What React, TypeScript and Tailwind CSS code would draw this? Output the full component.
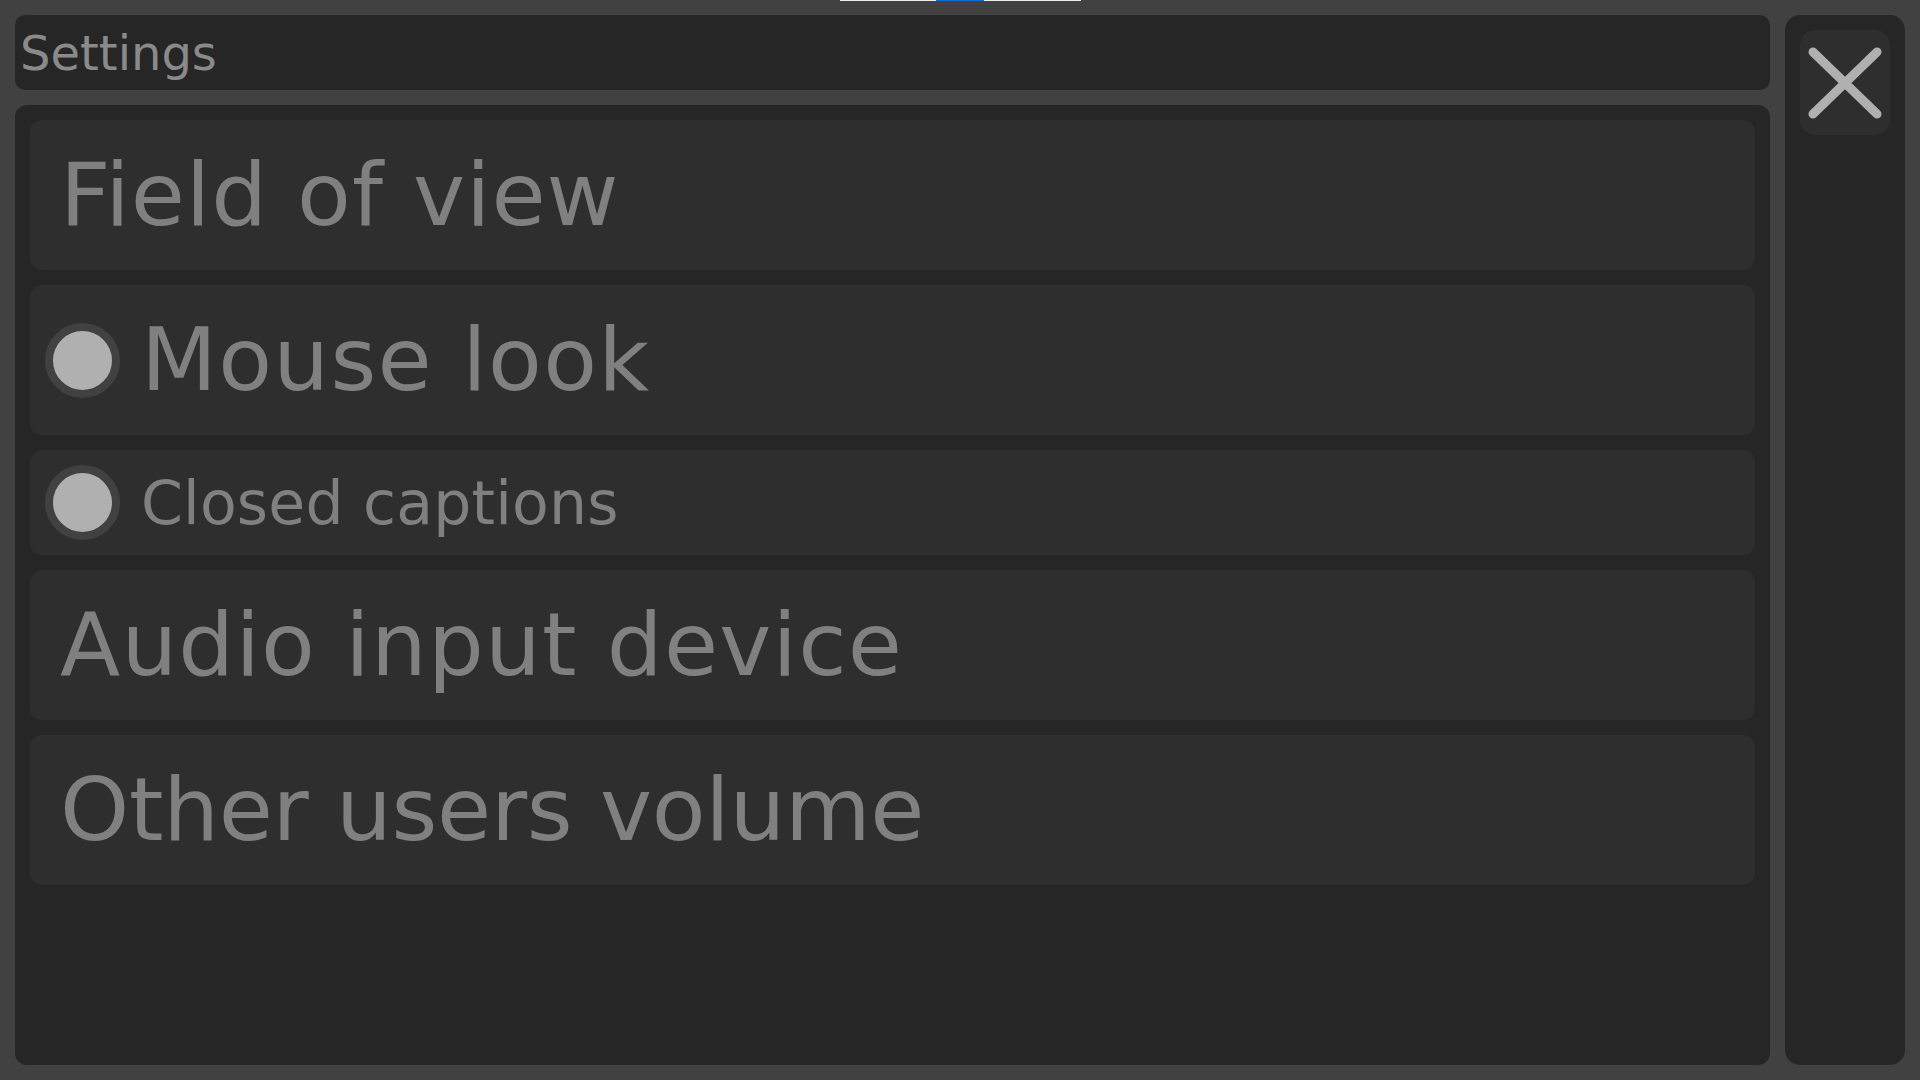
import React from 'react';

type Row = { label: string; toggle?: boolean; small?: boolean; track: string };

const rows: Row[] = [
    { label: 'Field of view', track: 'tracking-[1px]' },
    { label: 'Mouse look', toggle: true, track: 'tracking-[1.3px]' },
    { label: 'Closed captions', toggle: true, small: true, track: 'tracking-[0.2px]' },
    { label: 'Audio input device', track: 'tracking-[1.2px]' },
    { label: 'Other users volume', track: 'tracking-[-0.3px]' },
];

function Radio() {
    return (
        <div className="w-[75px] h-[75px] shrink-0 rounded-full border-[8px] border-[#414141] bg-[#b0b0b0]" />
    );
}

function SettingRow({ row }: { row: Row }) {
    return (
        <div
            className={`flex items-center bg-[#2e2e2e] rounded-[12px] shrink-0 ${
                row.small ? 'h-[105px]' : 'h-[150px]'
            } ${row.toggle ? 'pl-[15px] gap-[21px]' : 'pl-[30px]'}`}
        >
            {row.toggle && <Radio />}
            <span
                className={`leading-none text-[#808080] whitespace-nowrap ${row.track} ${
                    row.small ? 'text-[60px]' : 'text-[88px]'
                }`}
            >
                {row.label}
            </span>
        </div>
    );
}

export default function App() {
    return (
        <div
            className="relative w-screen h-screen overflow-hidden bg-[#414141] p-[15px] flex gap-[15px]"
            style={{ fontFamily: '"DejaVu Sans", sans-serif' }}
        >
            {/* loading strip at the very top */}
            <div className="absolute top-0 left-[840px] w-[241px] h-px bg-[#ededed]">
                <div className="absolute top-0 left-[96px] w-[48px] h-px bg-[#0a6fd0]" />
            </div>

            <div className="flex-1 flex flex-col gap-[15px] min-w-0">
                <div className="h-[75px] shrink-0 bg-[#262626] rounded-[10px] flex items-center pl-[5px]">
                    <span className="text-[48px] leading-none text-[#8a8a8a]">Settings</span>
                </div>
                <div className="flex-1 bg-[#262626] rounded-[12px] p-[15px] flex flex-col gap-[15px]">
                    {rows.map((r) => (
                        <SettingRow key={r.label} row={r} />
                    ))}
                </div>
            </div>

            <div className="w-[120px] shrink-0 bg-[#262626] rounded-[15px] p-[15px]">
                <button className="w-[90px] h-[105px] bg-[#2e2e2e] rounded-[15px] flex items-center justify-center">
                    <svg width="90" height="105" viewBox="0 0 90 105">
                        <path
                            d="M13 22 L77 84 M77 22 L13 84"
                            stroke="#b0b0b0"
                            strokeWidth="9"
                            strokeLinecap="round"
                            fill="none"
                        />
                    </svg>
                </button>
            </div>
        </div>
    );
}
